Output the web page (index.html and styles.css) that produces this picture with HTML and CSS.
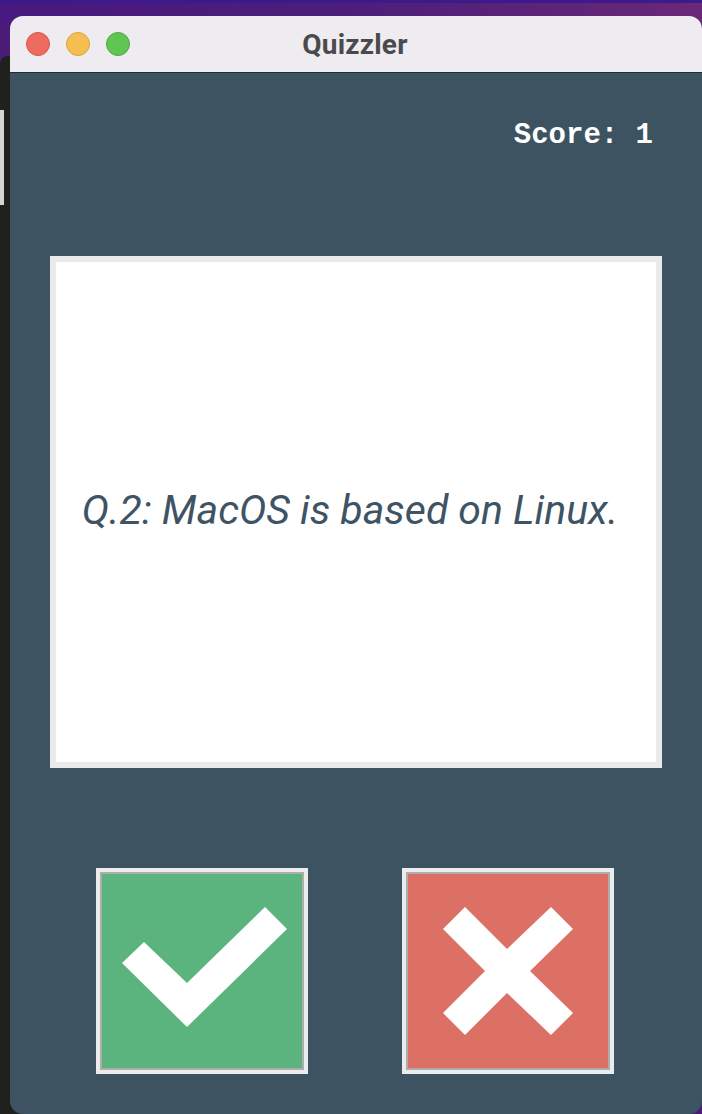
FILE: index.html
```html
<!DOCTYPE html>
<html lang="en">
<head>
<meta charset="utf-8">
<title>Quizzler</title>
<link rel="stylesheet" href="styles.css">
</head>
<body>
<div class="desktop">
  <div class="back-window"><div class="back-strip"></div></div>
  <div class="window">
    <div class="titlebar">
      <div class="lights">
        <span class="light red"></span>
        <span class="light yellow"></span>
        <span class="light green"></span>
      </div>
      <div class="title">Quizzler</div>
    </div>
    <div class="content">
      <div class="score">Score: 1</div>
      <div class="card">
        <p class="question">Q.2: MacOS is based on Linux.</p>
      </div>
      <div class="buttons">
        <button class="btn btn-true" type="button" aria-label="True">
          <svg width="200" height="194" viewBox="0 0 200 194">
            <rect width="200" height="194" fill="#5bb37d"/>
            <polygon points="20,89 42,68 85,109 163,33 185,55 85,153" fill="#ffffff"/>
          </svg>
        </button>
        <button class="btn btn-false" type="button" aria-label="False">
          <svg width="200" height="194" viewBox="0 0 200 194">
            <rect width="200" height="194" fill="#dd7064"/>
            <polygon points="35,55 57,33 99,75 143,33 165,55 122,97 165,139 143,161 99,119 57,161 35,139 77,97" fill="#ffffff"/>
          </svg>
        </button>
      </div>
    </div>
  </div>
</div>
</body>
</html>
```

FILE: styles.css
```css
html, body {
  margin: 0;
  padding: 0;
}

body {
  width: 702px;
  height: 1114px;
  overflow: hidden;
}

.desktop {
  position: relative;
  width: 702px;
  height: 1114px;
  background: linear-gradient(to bottom, #3d1a8c 0, #3d1a8c 3px, #4a1c7c 4px, #4b1d78 40px);
  overflow: hidden;
}

.desktop::before {
  content: "";
  position: absolute;
  left: 0;
  top: 3px;
  width: 702px;
  height: 20px;
  background: linear-gradient(to right, #48197e 0, #4c1e7a 50%, #6a2878 100%);
}

.back-window {
  position: absolute;
  left: 0;
  top: 56px;
  width: 40px;
  height: 1058px;
  background: #20201d;
  border-top-left-radius: 8px;
}

.back-strip {
  position: absolute;
  left: 0;
  top: 54px;
  width: 4px;
  height: 95px;
  background: #d5d5d1;
}

.window {
  position: absolute;
  left: 10px;
  top: 16px;
  width: 692px;
  height: 1098px;
  border-radius: 13px;
  overflow: hidden;
  display: flex;
  flex-direction: column;
  background: #3e5361;
}

.titlebar {
  position: relative;
  height: 56px;
  flex: none;
  background: #eeecf1;
  border-bottom: 1px solid #1e2c36;
  display: flex;
  align-items: center;
  justify-content: center;
}

.lights {
  position: absolute;
  left: 16px;
  top: 16px;
  display: flex;
  gap: 16px;
}

.light {
  width: 24px;
  height: 24px;
  border-radius: 50%;
  box-sizing: border-box;
}

.light.red {
  background: #ee6b60;
  border: 1px solid #d8544a;
}

.light.yellow {
  background: #f5bf4f;
  border: 1px solid #dba33a;
}

.light.green {
  background: #61c554;
  border: 1px solid #4ba93f;
}

.title {
  font-family: Roboto, "Noto Sans", sans-serif;
  font-weight: 700;
  font-size: 28px;
  color: #4a4a4c;
  letter-spacing: 0.2px;
  margin-left: -2px;
}

.content {
  flex: 1;
  display: flex;
  flex-direction: column;
  padding: 0 40px;
}

.score {
  margin-top: 46px;
  align-self: flex-end;
  margin-right: 9px;
  font-family: "Liberation Mono", "Courier New", monospace;
  font-weight: 700;
  font-size: 29px;
  line-height: 34px;
  color: #ffffff;
}

.card {
  margin-top: 103px;
  width: 612px;
  height: 512px;
  box-sizing: border-box;
  border: 6px solid #ebebeb;
  background: #ffffff;
  display: flex;
  align-items: center;
  justify-content: center;
  padding-right: 12px;
}

.question {
  margin: 0 0 4px 0;
  font-family: Roboto, "Liberation Sans", sans-serif;
  font-style: italic;
  font-size: 41px;
  color: #3e5364;
  white-space: nowrap;
}

.buttons {
  margin-top: 100px;
  display: flex;
  gap: 94px;
  padding-left: 46px;
}

.btn {
  width: 212px;
  height: 206px;
  box-sizing: border-box;
  border: 4px solid #ececec;
  padding: 2px;
  margin: 0;
  background: #adadad;
  box-shadow: inset 0 0 0 2px #adadad;
  cursor: pointer;
}

.btn svg {
  display: block;
}
```
